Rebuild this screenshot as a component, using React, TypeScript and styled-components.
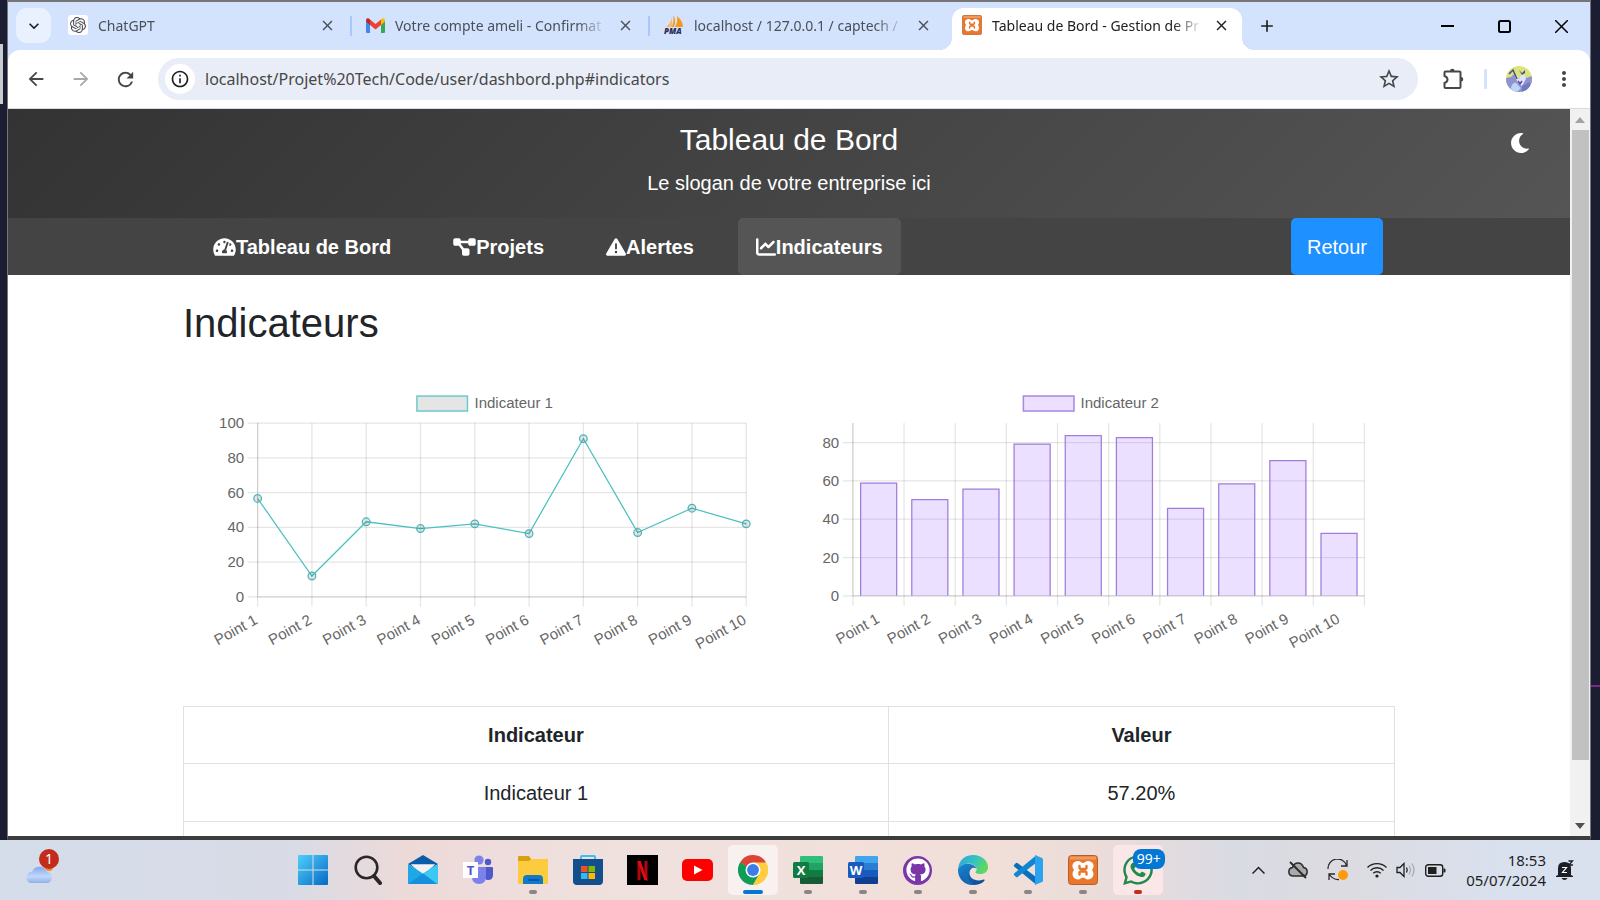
import React from "react";
import styled, { createGlobalStyle, css } from "styled-components";
import { FaTachometerAlt, FaMoon, FaGithub, FaWhatsapp } from "react-icons/fa";
import { FaDiagramProject, FaTriangleExclamation, FaChartLine } from "react-icons/fa6";
import { SiOpenai } from "react-icons/si";
import {
  MdArrowBack,
  MdArrowForward,
  MdRefresh,
  MdOutlineInfo,
  MdStarOutline,
  MdMoreVert,
  MdClose,
  MdAdd,
  MdKeyboardArrowDown,
} from "react-icons/md";

const Global = createGlobalStyle`
  * { box-sizing: border-box; }
  html, body { margin: 0; }
  body { overflow: hidden; background: #1b1d33; }
  button { font: inherit; color: inherit; border: 0; padding: 0; background: none; cursor: pointer; }
  a { color: inherit; text-decoration: none; }
  svg { display: block; flex: none; }
`;

const uiFont = `"Noto Sans", "Open Sans", sans-serif`;
const pageFont = `"Liberation Sans", Arial, sans-serif`;

/* ---------- Desktop and window ---------- */

const Desktop = styled.div`
  height: 100vh;
  display: flex;
  flex-direction: column;
  font-family: ${uiFont};
  color: #1f1f1f;
`;

const Stage = styled.div`
  flex: 1;
  min-height: 0;
  display: flex;
  background: #1b1d33;
`;

const LeftEdge = styled.div`
  flex: 0 0 7px;
  padding-top: 44px;
  &::before {
    content: "";
    display: block;
    width: 3px;
    height: 60px;
    background: #c8ccd0;
  }
`;

const RightEdge = styled.div`
  flex: 0 0 9px;
  display: flex;
  flex-direction: column;
  justify-content: flex-end;
  &::after {
    content: "";
    height: 2px;
    margin-bottom: 153px;
    background: #7a2a8c;
  }
`;

const BrowserWindow = styled.section`
  flex: 1;
  min-width: 0;
  display: flex;
  flex-direction: column;
  border: 1px solid #767676;
  border-top-width: 2px;
  border-bottom: 4px solid #3c3c3c;
  background: #d3e3fd;
`;

/* ---------- Tab strip ---------- */

const TabStrip = styled.div`
  flex: 0 0 48px;
  display: flex;
  padding-left: 8px;
`;

const TabSearch = styled.button`
  width: 35px;
  height: 35px;
  margin-top: 6px;
  border-radius: 11px;
  background: #e9f1fe;
  display: grid;
  place-items: center;
`;

const Tabs = styled.div`
  flex: 1;
  min-width: 0;
  display: flex;
  padding-left: 7px;
`;

const Tab = styled.div<{ $active?: boolean; $divider?: boolean }>`
  position: relative;
  flex: 0 1 298px;
  min-width: 0;
  height: 42px;
  margin-top: 6px;
  padding: 0 10px 8px;
  display: flex;
  align-items: center;
  gap: 10px;
  font-size: 14px;
  line-height: 24px;
  color: #4a4f58;
  ${(p) =>
    p.$active &&
    css`
      flex-basis: 290px;
      background: #fff;
      color: #202124;
      border-radius: 12px 12px 0 0;
      &::before,
      &::after {
        content: "";
        position: absolute;
        bottom: 0;
        width: 12px;
        height: 12px;
      }
      &::before {
        right: 100%;
        background: radial-gradient(circle at 0 0, transparent 12px, #fff 12px);
      }
      &::after {
        left: 100%;
        background: radial-gradient(circle at 100% 0, transparent 12px, #fff 12px);
      }
    `}
  ${(p) =>
    p.$divider &&
    css`
      &::after {
        content: "";
        position: absolute;
        right: 4px;
        top: 8px;
        width: 2px;
        height: 20px;
        background: #a8c7fa;
      }
    `}
`;

const TabTitle = styled.span`
  flex: 1;
  min-width: 0;
  padding-top: 2px;
  overflow: hidden;
  white-space: nowrap;
  mask-image: linear-gradient(to right, #000 calc(100% - 30px), transparent);
`;

const TabClose = styled.button<{ $inset?: boolean }>`
  margin-right: ${(p) => (p.$inset ? 10 : 2)}px;
`;

const NewTab = styled.button`
  width: 30px;
  height: 48px;
  margin-left: 10px;
  display: grid;
  place-items: center;
`;

const WindowControls = styled.div`
  display: flex;
  button {
    width: 57px;
    display: grid;
    place-items: center;
  }
`;

/* ---------- Toolbar ---------- */

const Toolbar = styled.div`
  flex: 0 0 59px;
  display: flex;
  align-items: center;
  background: #fff;
  border-radius: 12px 12px 0 0;
  border-bottom: 1px solid #d5dbe0;
  color: #474747;
`;

const ToolButton = styled.button<{ $muted?: boolean }>`
  width: 45px;
  height: 40px;
  display: grid;
  place-items: center;
  color: ${(p) => (p.$muted ? "#a9a9a9" : "inherit")};
`;

const NavButtons = styled.div`
  display: flex;
  padding-left: 5px;
  margin-right: 10px;
`;

const Omnibox = styled.div`
  flex: 1;
  min-width: 0;
  height: 42px;
  display: flex;
  align-items: center;
  gap: 10px;
  padding: 0 17px 0 7px;
  border-radius: 21px;
  background: #e9edf7;
`;

const SiteInfo = styled.button`
  width: 30px;
  height: 30px;
  border-radius: 50%;
  background: #fff;
  color: #1f1f1f;
  display: grid;
  place-items: center;
`;

const Address = styled.input`
  flex: 1;
  min-width: 0;
  border: 0;
  padding: 0;
  outline: 0;
  background: none;
  font-family: ${uiFont};
  font-size: 16px;
  color: #474747;
`;

const ToolDivider = styled.span`
  width: 3px;
  height: 20px;
  margin: 0 9px;
  border-radius: 1px;
  background: #d3e3fd;
`;

const ToolActions = styled.div`
  display: flex;
  align-items: center;
  padding-left: 12px;
  padding-right: 4px;
`;

/* ---------- Web page ---------- */

const Viewport = styled.div`
  flex: 1;
  min-height: 0;
  display: flex;
  background: #fff;
`;

const Page = styled.div`
  flex: 1;
  min-width: 0;
  overflow: hidden;
  font-family: ${pageFont};
  font-size: 20px;
  line-height: 30px;
  color: #212529;
`;

const Header = styled.header`
  position: relative;
  height: 109px;
  padding-top: 13px;
  text-align: center;
  color: #fff;
  background: linear-gradient(135deg, #333, #555);
`;

const SiteTitle = styled.h1`
  margin: 0 0 10px;
  font-size: 30px;
  line-height: 36px;
  font-weight: 400;
`;

const Slogan = styled.p`
  margin: 0;
`;

const ThemeToggle = styled.button`
  position: absolute;
  top: 24px;
  right: 40px;
`;

const NavBar = styled.nav`
  background: #444;
  color: #fff;
`;

const Container = styled.div`
  width: calc(100% - 350px);
  margin: 0 auto;
`;

const NavRow = styled(Container)`
  display: flex;
  justify-content: space-between;
  padding: 0 12px;
`;

const NavList = styled.div`
  display: flex;
  gap: 26px;
`;

const NavLink = styled.a<{ $active?: boolean }>`
  height: 57px;
  padding: 0 18px;
  display: flex;
  align-items: center;
  font-weight: 700;
  border-radius: 5px;
  background: ${(p) => (p.$active ? "#555" : "transparent")};
`;

const NavIcon = styled.span<{ $wide?: boolean }>`
  svg {
    width: ${(p) => (p.$wide ? 23 : 20)}px;
    height: 20px;
  }
`;

const BackLink = styled.a`
  height: 57px;
  padding: 0 16px;
  display: flex;
  align-items: center;
  border-radius: 5px;
  background: #1e90ff;
`;

const SectionTitle = styled.h2`
  margin: 0;
  padding: 24px 0 35px;
  font-size: 40px;
  line-height: 48px;
  font-weight: 400;
`;

const Charts = styled.div`
  display: grid;
  grid-template-columns: 1fr 1fr;
  margin-bottom: 43px;
  svg {
    width: 100%;
    height: auto;
    font-size: 15px;
    fill: #666;
  }
`;

const DataTable = styled.table`
  width: 100%;
  border-collapse: collapse;
  text-align: center;
  th,
  td {
    padding: 13px;
    border: 1px solid #dee2e6;
  }
  th {
    height: 57px;
  }
  td {
    height: 58px;
  }
  th:first-child {
    width: 58.2%;
  }
`;

/* ---------- Scrollbar ---------- */

const Scrollbar = styled.div`
  flex: 0 0 20px;
  display: flex;
  flex-direction: column;
  align-items: center;
  background: #f1f1f1;
`;

const ScrollArrow = styled.button`
  height: 21px;
`;

const ScrollTrack = styled.div`
  flex: 1;
  width: 17px;
`;

const ScrollThumb = styled.div`
  height: 92%;
  background: #c1c1c1;
`;

/* ---------- Taskbar ---------- */

const TaskbarRoot = styled.footer`
  flex: 0 0 60px;
  display: grid;
  grid-template-columns: 25fr auto 38fr;
  background: linear-gradient(to right, #d5ddea 0%, #d8dbe6 18%, #ecdad9 25%, #f0e1df 40%, #f1dfd8 62%, #eadcdb 70%, #d9dbe3 77%, #dcdbe1 84%, #d9e1ef 95%);
`;

const Widget = styled.button`
  position: relative;
  width: 36px;
  height: 46px;
  margin: 9px 0 0 24px;
  display: flex;
  align-items: flex-end;
  padding-bottom: 11px;
`;

const Count = styled.span`
  position: absolute;
  top: 0;
  right: 1px;
  width: 20px;
  height: 20px;
  border-radius: 50%;
  background: #c42b1c;
  color: #fff;
  font-size: 14px;
  line-height: 20px;
  text-align: center;
`;

const Apps = styled.div`
  display: flex;
  gap: 5px;
  align-items: center;
`;

const AppButton = styled.button<{ $bg?: string }>`
  position: relative;
  width: 50px;
  height: 50px;
  display: grid;
  place-items: center;
  border-radius: 5px;
  background: ${(p) => p.$bg ?? "transparent"};
`;

const Running = styled.span<{ $color: string; $wide?: boolean }>`
  position: absolute;
  bottom: 1px;
  left: 50%;
  width: ${(p) => (p.$wide ? 20 : 8)}px;
  height: 4px;
  transform: translateX(-50%);
  border-radius: 2px;
  background: ${(p) => p.$color};
`;

const Unread = styled.span`
  position: absolute;
  top: 4px;
  left: 20px;
  padding: 0 4px;
  border-radius: 8px;
  background: #0078d4;
  color: #fff;
  font-size: 14px;
  line-height: 20px;
`;

const Tray = styled.div`
  display: flex;
  align-items: center;
  justify-content: flex-end;
  padding-right: 26px;
`;

const TrayButton = styled.button`
  width: 40px;
  display: grid;
  place-items: center;
`;

const TrayGroup = styled.button`
  display: flex;
  align-items: center;
  gap: 9px;
  margin: 0 20px 0 9px;
`;

const Clock = styled.div`
  margin-right: 10px;
  text-align: right;
  font-size: 15px;
  line-height: 20px;
`;

/* ---------- Charts ---------- */

const lineValues = [56.6, 12, 43.2, 39.3, 42, 36.4, 91, 37, 51, 42];
const barValues = [58.8, 50.2, 55.7, 79.2, 83.7, 82.6, 45.7, 58.5, 70.6, 32.6];

const grid = { stroke: "rgba(0,0,0,0.1)", strokeWidth: 1.25 };

const XLabel = ({ x, y, n }: { x: number; y: number; n: number }) => (
  <text textAnchor="end" transform={`translate(${x} ${y}) rotate(-29)`}>
    Point {n}
  </text>
);

function LineChart() {
  const left = 74.5;
  const step = 54.2;
  const top = 41;
  const bottom = 214.5;
  const unit = (bottom - top) / 100;
  const pts = lineValues.map((v, i) => [left + i * step, bottom - v * unit]);
  const right = left + step * 9;
  return (
    <svg viewBox="0 0 605 281" role="img" aria-label="Indicateur 1">
      <rect x="233.5" y="14" width="50.5" height="15" fill="#e5e5e5" stroke="rgb(75,192,192)" strokeWidth="1.5" strokeOpacity="0.8" />
      <text x="291" y="26">Indicateur 1</text>
      {[0, 20, 40, 60, 80, 100].map((v) => (
        <g key={v}>
          <line x1={left - 10} x2={right} y1={bottom - v * unit} y2={bottom - v * unit} {...grid} />
          <text x="61" y={bottom - v * unit + 5} textAnchor="end">{v}</text>
        </g>
      ))}
      {pts.map(([x], i) => (
        <g key={i}>
          <line x1={x} x2={x} y1={top} y2={bottom + 10} {...grid} />
          <XLabel x={x + 1} y={bottom + 26} n={i + 1} />
        </g>
      ))}
      <path d={`M${left} ${top}V${bottom}H${right}`} fill="none" {...grid} />
      <polyline points={pts.map((p) => p.join(",")).join(" ")} fill="none" stroke="rgb(75,192,192)" strokeWidth="1.25" />
      {pts.map(([x, y], i) => (
        <circle key={i} cx={x} cy={y} r="3.8" fill="rgba(0,0,0,0.1)" stroke="rgb(75,180,185)" strokeWidth="1.25" />
      ))}
    </svg>
  );
}

function BarChart() {
  const left = 63.8;
  const step = 51.07;
  const top = 41;
  const bottom = 213.5;
  const unit = 1.9125;
  const right = left + step * 10;
  return (
    <svg viewBox="0 0 605 281" role="img" aria-label="Indicateur 2">
      <rect x="234" y="14" width="50.5" height="15" fill="#ebe0ff" stroke="#a887e0" strokeWidth="1.5" />
      <text x="291" y="26">Indicateur 2</text>
      {[0, 20, 40, 60, 80].map((v) => (
        <g key={v}>
          <line x1={left - 10} x2={right} y1={bottom - v * unit} y2={bottom - v * unit} {...grid} />
          <text x="50" y={bottom - v * unit + 5} textAnchor="end">{v}</text>
        </g>
      ))}
      {[...barValues, 0].map((_, i) => (
        <line key={i} x1={left + i * step} x2={left + i * step} y1={top} y2={bottom + 10} {...grid} />
      ))}
      <path d={`M${left} ${top}V${bottom}H${right}`} fill="none" {...grid} />
      {barValues.map((v, i) => {
        const x = left + i * step + 7.7;
        const y = bottom - v * unit;
        return (
          <g key={i}>
            <rect x={x} y={y} width="36" height={v * unit} fill="rgba(153,102,255,0.2)" />
            <path d={`M${x} ${bottom}V${y}h36V${bottom}`} fill="none" stroke="#a07cdc" strokeWidth="1.25" />
            <XLabel x={left + (i + 0.5) * step + 2} y={bottom + 26} n={i + 1} />
          </g>
        );
      })}
    </svg>
  );
}

/* ---------- Icons ---------- */

const Gmail = () => (
  <svg width="19" height="15" viewBox="0 0 19 15">
    <path d="M0 2v12q0 1 1 1h3V5z" fill="#4285f4" />
    <path d="M19 2v12q0 1-1 1h-3V5z" fill="#34a853" />
    <path d="M15 5V1.500Q17-.5 18.500.8 19 1.200 19 3.500L15 7z" fill="#fbbc04" />
    <path d="M4 5V1.500Q2-.5.5.8 0 1.200 0 3.500L4 7z" fill="#c5221f" />
    <path d="M4 1.500l5.500 4.500L15 1.500V7L9.500 11.500 4 7z" fill="#ea4335" />
  </svg>
);

const PmaText = styled.text`
  font: italic 900 8px "Open Sans", sans-serif;
`;

const PhpMyAdmin = () => (
  <svg width="20" height="20" viewBox="0 0 20 20">
    <path d="M8 1Q8 7 2 12h6z" fill="#fbb668" />
    <path d="M9.500 0q3 6 .5 12H8Q10 6 9.500 0z" fill="#f89c0e" />
    <path d="M13 1q6 5 6 11h-8q3-5 2-11z" fill="#f8981d" />
    <PmaText x="0" y="19" fill="#2e2e55">PMA</PmaText>
  </svg>
);

const Xampp = ({ size }: { size: number }) => (
  <svg width={size} height={size} viewBox="0 0 30 30">
    <rect x="0.500" y="0.500" width="29" height="29" rx="3" fill="#e9762b" stroke="#b45f2b" />
    <rect x="2" y="1.500" width="26" height="3" fill="#f2a878" opacity="0.7" />
    <path
      d="M10 7.500c-3 0-4.500 2-4 4 .2 1.500 1.500 2.500 1.500 3.500S6 17 6 19s1.500 4 4 4c2 0 2.500-2 5-2s3 2 5 2c2.500 0 4-2 4-4s-1.500-3-1.500-4 1.300-2 1.500-3.500c.5-2-1-4-4-4-2 0-2.500 2-5 2s-3-2-5-2z"
      fill="#fff"
      stroke="#fff"
      strokeWidth="3"
      strokeLinejoin="round"
    />
    <path
      d="M11.500 11v1.500q0 1.500 1.500 1.500h4q1.500 0 1.500-1.500V11M11.500 19.500V18q0-1.500 1.500-1.500h4q1.500 0 1.500 1.500v1.500M13.500 15.200h3"
      fill="none"
      stroke="#e9762b"
      strokeWidth="2.400"
      strokeLinecap="round"
    />
  </svg>
);

const GptBox = styled.span`
  width: 20px;
  height: 20px;
  border-radius: 3px;
  background: #fff;
  display: grid;
  place-items: center;
`;

const Puzzle = () => (
  <svg width="24" height="24" viewBox="0 0 24 24" fill="none" stroke="#474747" strokeWidth="2">
    <path d="M3.500 5.500q0-1 1-1h14q1 0 1 1v14.500q0 1-1 1h-14q-1 0-1-1v-4q3-1 3-3.500t-3-3.500z" />
    <path d="M9 4a2.300 2.300 0 0 1 4.600 0zM20 10a2.300 2.300 0 0 1 0 4.600z" fill="#474747" stroke="none" />
  </svg>
);

const Avatar = () => (
  <svg width="26" height="26" viewBox="0 0 26 26">
    <defs>
      <clipPath id="av"><circle cx="13" cy="13" r="13" /></clipPath>
    </defs>
    <g clipPath="url(#av)">
      <path fill="#dbe37c" d="M0 0h26v26H0z" />
      <path fill="#8e93d0" d="M0 12l5-1 4-4 3 5 8 0 6-2v16H0z" />
      <path fill="#bcd4f6" d="M6 19q3-5 6 0l3 3-5 5-6-3z" />
      <path fill="#dfe3fb" d="M8 5l5 8 4-7 3 7-4 7-4-3-3-6z" />
      <path d="M3 8l4-4 4 9" fill="none" stroke="#4c4c86" strokeWidth="1.500" />
      <path d="M13 4l3 3 3-3v3l-3 2z" fill="#4c4c86" />
      <path d="M12 15l2 3 2-3" fill="none" stroke="#5a4b9c" strokeWidth="1.500" />
      <path fill="#6f79c4" d="M16 20l8-4v8l-8 3z" />
    </g>
  </svg>
);

const Cloud = () => (
  <svg width="30" height="22" viewBox="0 0 30 22">
    <defs>
      <linearGradient id="cl" x1="0" y1="0" x2="0" y2="1">
        <stop offset="0" stopColor="#84a9ec" />
        <stop offset="0.600" stopColor="#c2d8fa" />
        <stop offset="1" stopColor="#8fb0ea" />
      </linearGradient>
    </defs>
    <circle cx="25" cy="5" r="4" fill="#f08a24" />
    <path d="M6 21a6 6 0 0 1 0-11q1.500 0 2 0a8 8 0 0 1 15 0 5.700 5.700 0 0 1 1 11z" fill="url(#cl)" />
  </svg>
);

const Start = () => (
  <svg width="30" height="30" viewBox="0 0 30 30">
    <defs>
      <linearGradient id="st" x1="0" y1="0" x2="30" y2="30" gradientUnits="userSpaceOnUse">
        <stop stopColor="#4fd0fb" />
        <stop offset="1" stopColor="#0669c4" />
      </linearGradient>
    </defs>
    <path d="M1 0h13.500v14.500H0V1q0-1 1-1zM15.500 0H29q1 0 1 1v13.500H15.500zM0 15.500h14.500V30H1q-1 0-1-1zM15.500 15.500H30V29q0 1-1 1H15.500z" fill="url(#st)" />
  </svg>
);

const Search = () => (
  <svg width="28" height="30" viewBox="0 0 28 30" fill="none" stroke="#2b2727">
    <circle cx="12.500" cy="12.500" r="10.800" strokeWidth="2.600" />
    <path d="M20 21l6 7" strokeWidth="4" strokeLinecap="round" />
  </svg>
);

const Mail = () => (
  <svg width="30" height="30" viewBox="0 0 30 30">
    <path d="M0 9L15 0l15 9-15 9z" fill="#0a5cab" />
    <path d="M3 9.500h24L15 20z" fill="#f2f2f2" />
    <path d="M0 9l15 9.500L30 9v19q0 1-1 1H1q-1 0-1-1z" fill="#1fa8e8" />
    <path d="M30 9v19q0 1-1 1L15 18.500z" fill="#3cc8f2" />
    <path d="M0 29l15-10.500L29 29z" fill="#1590dd" />
    <path d="M3 9.500h24L15 18.500z" fill="#f2f2f2" />
  </svg>
);

const Teams = () => (
  <svg width="30" height="30" viewBox="0 0 30 30">
    <circle cx="25" cy="7" r="3.200" fill="#5059c9" />
    <path d="M21 12h8q1 0 1 1v7q0 5-5 5-4 0-4-5z" fill="#5059c9" />
    <circle cx="16" cy="5" r="4.600" fill="#7b83eb" />
    <path d="M10 12h12q1 0 1 1v8q0 8-7 8t-7-7z" fill="#7b83eb" />
    <path d="M0 7h15v16H0z" fill="#fff" />
    <OfficeLetter x="7.5" y="20" fill="#5059c9">T</OfficeLetter>
  </svg>
);

const Folder = () => (
  <svg width="30" height="28" viewBox="0 0 30 28">
    <path d="M0 1q0-1 1-1h10l2 3h16q1 0 1 1v6H0z" fill="#d8a010" />
    <path d="M0 5h11l2-2h16q1 0 1 1v23q0 1-1 1H1q-1 0-1-1z" fill="#fccb3e" />
    <path d="M5 28v-5q0-4 4-4h12q4 0 4 4v5z" fill="#1279c8" />
    <path d="M10 24h11" stroke="#0b4e91" strokeWidth="1.500" />
  </svg>
);

const Store = () => (
  <svg width="30" height="30" viewBox="0 0 30 30">
    <path d="M8 6V2q0-1 1-1h12q1 0 1 1v4" fill="none" stroke="#39c0f0" strokeWidth="2" />
    <path d="M0 4h30v22q0 4-4 4H4q-4 0-4-4z" fill="#124f8c" />
    <path d="M8 11h6.500v6H8z" fill="#f25022" />
    <path d="M15.500 11H22v6h-6.500z" fill="#7fba00" />
    <path d="M8 18h6.500v6H8z" fill="#36b7f0" />
    <path d="M15.500 18H22v6h-6.500z" fill="#ffb900" />
  </svg>
);

const Netflix = () => (
  <svg width="31" height="30" viewBox="0 0 31 30">
    <path d="M0 0h31v30H0z" />
    <path d="M10.500 6h3v19l-3 .5zM17.500 6h3v19.500l-3-.5z" fill="#b1060f" />
    <path d="M10.500 6h3.200l6.800 19.500-3.200-.5z" fill="#e50914" />
  </svg>
);

const Youtube = () => (
  <svg width="31" height="22" viewBox="0 0 31 22">
    <rect width="31" height="22" rx="5" fill="#f00" />
    <path d="M12 6.500l8.500 4.500-8.500 4.500z" fill="#fff" />
  </svg>
);

const Chrome = () => (
  <svg width="30" height="30" viewBox="0 0 48 48">
    <path d="M24 24L3.200 12A24 24 0 0 1 44.800 12z" fill="#db4437" />
    <path d="M24 24h0L44.800 12A24 24 0 0 1 24 48z" fill="#ffcd40" />
    <path d="M3.200 12A24 24 0 0 0 24 48l10.400-18L24 24z" fill="#0f9d58" />
    <path d="M24 12h20.800A24 24 0 0 1 24 48l10.400-18z" fill="#ffcd40" />
    <path d="M3.200 12L13.600 30 24 24z" fill="#0f9d58" />
    <circle cx="24" cy="24" r="12" fill="#fff" />
    <circle cx="24" cy="24" r="9.500" fill="#3b7de9" />
  </svg>
);

const OfficeLetter = styled.text`
  font: 700 13px "Open Sans", sans-serif;
  text-anchor: middle;
`;

const Office = ({ letter, shades }: { letter: string; shades: string[] }) => (
  <svg width="30" height="28" viewBox="0 0 30 28">
    <path d="M8 0h21q1 0 1 1v6H7V1q0-1 1-1z" fill={shades[0]} />
    <path d="M7 7h23v7H7z" fill={shades[1]} />
    <path d="M7 14h23v7H7z" fill={shades[2]} />
    <path d="M7 21h23v6q0 1-1 1H8q-1 0-1-1z" fill={shades[3]} />
    <rect y="6" width="16" height="16" rx="1.500" fill={shades[4]} />
    <OfficeLetter x="8" y="19" fill="#fff">{letter}</OfficeLetter>
  </svg>
);

const GithubDisc = styled.span`
  width: 29px;
  height: 29px;
  border-radius: 50%;
  background: #7a35a8;
  color: #fff;
  display: grid;
  place-items: center;
`;

const Edge = () => (
  <svg width="30" height="30" viewBox="0 0 30 30">
    <defs>
      <linearGradient id="e1" x1="0" y1="0" x2="1" y2="0.400">
        <stop stopColor="#2aa5e0" />
        <stop offset="0.600" stopColor="#35c4c0" />
        <stop offset="1" stopColor="#5fd85c" />
      </linearGradient>
      <linearGradient id="e2" x1="0" y1="0" x2="0.600" y2="1">
        <stop stopColor="#1b8bd6" />
        <stop offset="1" stopColor="#0f4f9a" />
      </linearGradient>
    </defs>
    <path d="M0 14C1 5 7 0 15 0c9 0 15 6 15 12 0 5-4 7-7.500 7S17 18 17.500 17c1.500-1.500 1.500-3 .5-5C15 7 5 7 0 14z" fill="url(#e1)" />
    <path d="M0 14c3-5 8-6 12-5 3 .5 5.500 2 6.500 4.500-3-2-7 0-7 4.500 0 6 7 9 14 6.500.7-.3 1.500 0 1 1C24 29 19 30 15 30 6 30-.500 23 0 14z" fill="url(#e2)" />
    <path d="M9 16q-1 10 8 13.500Q7 31 5 23q-.5-6 6-10-2 1.500-2 3z" fill="#1272bd" opacity="0.700" />
  </svg>
);

const VsCode = () => (
  <svg width="30" height="30" viewBox="0 0 30 30">
    <path d="M1 10l2-2q.7-.5 1.500 0L23 22v7.500L1.200 11.500Q.5 10.700 1 10z" fill="#0a6ebd" />
    <path d="M1 20l2 2q.7.5 1.500 0L23 8V.5L1.200 18.500q-.7.700-.2 1.500z" fill="#1186d0" />
    <path d="M22 0l7 3q1 .5 1 1.500v21q0 1-1 1.500l-7 3z" fill="#2ba3ee" />
  </svg>
);

const CloudOff = () => (
  <svg width="22" height="18" viewBox="0 0 22 18" fill="none" stroke="#2b2b2b" strokeWidth="1.500">
    <path d="M5.500 15a4.300 4.300 0 0 1 0-8.500Q7 2 11 2t5.500 4.500a4.300 4.300 0 0 1 0 8.500z" fill="#aaa" />
    <path d="M3 1l16 16" strokeWidth="2" />
  </svg>
);

const Sync = () => (
  <svg width="22" height="22" viewBox="0 0 22 22" fill="none" stroke="#2b2b2b" strokeWidth="1.300">
    <path d="M1 10A9.500 9.500 0 0 1 19.500 6.500M20 1v6h-6M12 20.500Q6 21 2 15M2 21v-6h6" />
    <circle cx="16" cy="16" r="5" fill="#ff9a0c" stroke="none" />
  </svg>
);

const Wifi = () => (
  <svg width="20" height="16" viewBox="0 0 20 16" fill="none" stroke="#1f1f1f" strokeWidth="1.400">
    <path d="M.5 5.500a13.500 13.500 0 0 1 19 0M3.500 8.500a9.200 9.200 0 0 1 13 0M6.300 11.300a5.200 5.200 0 0 1 7.400 0" />
    <circle cx="10" cy="14" r="1.600" fill="#1f1f1f" stroke="none" />
  </svg>
);

const Speaker = () => (
  <svg width="20" height="16" viewBox="0 0 20 16" fill="none" stroke="#1f1f1f" strokeWidth="1.300">
    <path d="M1 5.500h3L8 1.500v13L4 10.500H1z" />
    <path d="M10.500 5.500q1.500 2.500 0 5" />
    <path d="M13 3.500q3 4.500 0 9M16 1.500q4 6.500 0 13" stroke="#a9a9ae" />
  </svg>
);

const Battery = () => (
  <svg width="21" height="13" viewBox="0 0 21 13">
    <rect x="0.700" y="0.700" width="17" height="11.600" rx="2.500" fill="none" stroke="#1f1f1f" strokeWidth="1.400" />
    <path d="M3 3h8.500v7H3zM18.500 4.500h1q1 0 1 1v2q0 1-1 1h-1z" fill="#1f1f1f" />
  </svg>
);

const Bell = () => (
  <svg width="18" height="20" viewBox="0 0 18 20">
    <path d="M2 15V8q0-6 6.500-6T15 8v7l2 1v1H0v-1zM5.500 18h6q-1 2-3 2t-3-2z" fill="#1c1f26" />
    <path d="M6 7.500h4.500L6.500 12.500H11" fill="none" stroke="#fff" strokeWidth="1.200" />
    <path d="M12.500 1h4l-3.500 4h4" fill="none" stroke="#1c1f26" strokeWidth="1.300" />
  </svg>
);

const Triangle = ({ down }: { down?: boolean }) => (
  <svg width="10" height="6" viewBox="0 0 10 6">
    <path d={down ? "M0 0h10L5 6z" : "M0 6h10L5 0z"} fill={down ? "#505050" : "#a3a3a3"} />
  </svg>
);

/* ---------- Data ---------- */

const tabs = [
  { title: "ChatGPT", icon: <GptBox><SiOpenai size={16} /></GptBox> },
  { title: "Votre compte ameli - Confirmat", icon: <Gmail /> },
  { title: "localhost / 127.0.0.1 / captech /", icon: <PhpMyAdmin /> },
  { title: "Tableau de Bord - Gestion de Pr", icon: <Xampp size={20} /> },
];

const links = [
  { label: "Tableau de Bord", icon: <FaTachometerAlt />, wide: true },
  { label: "Projets", icon: <FaDiagramProject />, wide: true },
  { label: "Alertes", icon: <FaTriangleExclamation /> },
  { label: "Indicateurs", icon: <FaChartLine /> },
];

type AppItem = { name: string; icon: React.ReactNode; bg?: string; running?: string; wide?: boolean; unread?: string };

const apps: AppItem[] = [
  { name: "Démarrer", icon: <Start /> },
  { name: "Rechercher", icon: <Search /> },
  { name: "Courrier", icon: <Mail /> },
  { name: "Teams", icon: <Teams /> },
  { name: "Explorateur", icon: <Folder />, running: "#8b8585" },
  { name: "Store", icon: <Store /> },
  { name: "Netflix", icon: <Netflix /> },
  { name: "YouTube", icon: <Youtube /> },
  { name: "Chrome", icon: <Chrome />, bg: "#f8f1f0", running: "#0078d4", wide: true },
  { name: "Excel", icon: <Office letter="X" shades={["#2fbf7a", "#21a366", "#107c41", "#185c37", "#107c41"]} />, running: "#8b8585" },
  { name: "Word", icon: <Office letter="W" shades={["#41a5ee", "#2b7cd3", "#185abd", "#103f91", "#185abd"]} />, running: "#8b8585" },
  { name: "GitHub Desktop", icon: <GithubDisc><FaGithub size={24} /></GithubDisc>, running: "#8b8585" },
  { name: "Edge", icon: <Edge />, running: "#8b8585" },
  { name: "Visual Studio Code", icon: <VsCode />, running: "#8b8585" },
  { name: "XAMPP", icon: <Xampp size={30} />, running: "#8b8585" },
  { name: "WhatsApp", icon: <FaWhatsapp size={34} color="#1f8a4c" />, bg: "#fbe6e8", running: "#c42b1c", unread: "99+" },
];

export default function App() {
  return (
    <Desktop>
      <Global />
      <Stage>
        <LeftEdge />
        <BrowserWindow>
          <TabStrip>
            <TabSearch aria-label="Rechercher dans les onglets"><MdKeyboardArrowDown size={20} /></TabSearch>
            <Tabs>
              {tabs.map((t, i) => (
                <Tab key={t.title} $active={i === 3} $divider={i < 2}>
                  {t.icon}
                  <TabTitle>{t.title}</TabTitle>
                  <TabClose aria-label="Fermer l'onglet" $inset={i < 3}><MdClose size={17} /></TabClose>
                </Tab>
              ))}
              <NewTab aria-label="Nouvel onglet"><MdAdd size={20} /></NewTab>
            </Tabs>
            <WindowControls>
              <button aria-label="Réduire"><svg width="13" height="2"><path d="M0 0h13v2H0z" /></svg></button>
              <button aria-label="Agrandir">
                <svg width="13" height="13"><rect x="1" y="1" width="11" height="11" rx="1.500" fill="none" stroke="#000" strokeWidth="2" /></svg>
              </button>
              <button aria-label="Fermer">
                <svg width="13" height="13"><path d="M0 0l13 13M13 0L0 13" stroke="#000" strokeWidth="1.500" /></svg>
              </button>
            </WindowControls>
          </TabStrip>

          <Toolbar>
            <NavButtons>
              <ToolButton aria-label="Précédent"><MdArrowBack size={22} /></ToolButton>
              <ToolButton aria-label="Suivant" $muted><MdArrowForward size={22} /></ToolButton>
              <ToolButton aria-label="Actualiser"><MdRefresh size={23} /></ToolButton>
            </NavButtons>
            <Omnibox>
              <SiteInfo aria-label="Informations sur le site"><MdOutlineInfo size={20} /></SiteInfo>
              <Address aria-label="Adresse" defaultValue="localhost/Projet%20Tech/Code/user/dashbord.php#indicators" />
              <button aria-label="Ajouter aux favoris"><MdStarOutline size={24} /></button>
            </Omnibox>
            <ToolActions>
              <ToolButton aria-label="Extensions"><Puzzle /></ToolButton>
              <ToolDivider />
              <ToolButton aria-label="Profil"><Avatar /></ToolButton>
              <ToolButton aria-label="Menu"><MdMoreVert size={24} /></ToolButton>
            </ToolActions>
          </Toolbar>

          <Viewport>
            <Page>
              <Header>
                <SiteTitle>Tableau de Bord</SiteTitle>
                <Slogan>Le slogan de votre entreprise ici</Slogan>
                <ThemeToggle aria-label="Mode sombre"><FaMoon size={20} /></ThemeToggle>
              </Header>
              <NavBar>
                <NavRow>
                  <NavList>
                    {links.map((l) => (
                      <NavLink key={l.label} href="#indicators" $active={l.label === "Indicateurs"}>
                        <NavIcon $wide={l.wide}>{l.icon}</NavIcon>
                        {l.label}
                      </NavLink>
                    ))}
                  </NavList>
                  <BackLink href="#retour">Retour</BackLink>
                </NavRow>
              </NavBar>
              <Container>
                <SectionTitle>Indicateurs</SectionTitle>
                <Charts>
                  <LineChart />
                  <BarChart />
                </Charts>
                <DataTable>
                  <thead>
                    <tr><th>Indicateur</th><th>Valeur</th></tr>
                  </thead>
                  <tbody>
                    <tr><td>Indicateur 1</td><td>57.20%</td></tr>
                    <tr><td /><td /></tr>
                  </tbody>
                </DataTable>
              </Container>
            </Page>
            <Scrollbar>
              <ScrollArrow aria-label="Défiler vers le haut"><Triangle /></ScrollArrow>
              <ScrollTrack><ScrollThumb /></ScrollTrack>
              <ScrollArrow aria-label="Défiler vers le bas"><Triangle down /></ScrollArrow>
            </Scrollbar>
          </Viewport>
        </BrowserWindow>
        <RightEdge />
      </Stage>

      <TaskbarRoot>
        <Widget aria-label="Météo"><Cloud /><Count>1</Count></Widget>
        <Apps>
          {apps.map((a) => (
            <AppButton key={a.name} aria-label={a.name} $bg={a.bg}>
              {a.icon}
              {a.unread && <Unread>{a.unread}</Unread>}
              {a.running && <Running $color={a.running} $wide={a.wide} />}
            </AppButton>
          ))}
        </Apps>
        <Tray>
          <TrayButton aria-label="Icônes masquées">
            <svg width="13" height="8" fill="none" stroke="#1f1f1f" strokeWidth="1.500"><path d="M.5 7.500l6-6 6 6" /></svg>
          </TrayButton>
          <TrayButton aria-label="OneDrive"><CloudOff /></TrayButton>
          <TrayButton aria-label="Synchronisation"><Sync /></TrayButton>
          <TrayGroup aria-label="Réseau, son, batterie"><Wifi /><Speaker /><Battery /></TrayGroup>
          <Clock>18:53<br />05/07/2024</Clock>
          <Bell />
        </Tray>
      </TaskbarRoot>
    </Desktop>
  );
}
